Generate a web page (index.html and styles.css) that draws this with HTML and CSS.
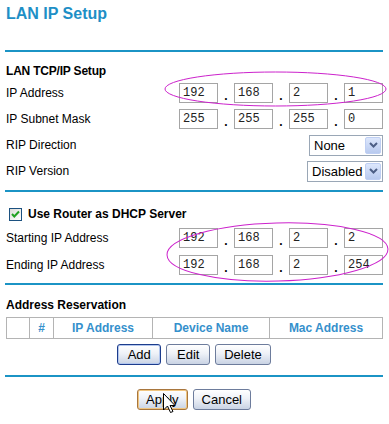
FILE: index.html
```html
<!DOCTYPE html>
<html lang="en">
<head>
    <meta charset="UTF-8">
    <title>LAN IP Setup</title>
    <link rel="stylesheet" href="styles.css">
</head>
<body>
<div class="page">
    <h1 class="title">LAN IP Setup</h1>
    <div class="rule rule-top"></div>

    <div class="section-title">LAN TCP/IP Setup</div>
    <div class="row">
        <span class="label">IP Address</span>
        <div class="ip">
            <input type="text" value="192"><span class="dot">.</span><input type="text" value="168"><span class="dot">.</span><input type="text" value="2"><span class="dot">.</span><input type="text" value="1">
        </div>
    </div>
    <div class="row">
        <span class="label">IP Subnet Mask</span>
        <div class="ip">
            <input type="text" value="255"><span class="dot">.</span><input type="text" value="255"><span class="dot">.</span><input type="text" value="255"><span class="dot">.</span><input type="text" value="0">
        </div>
    </div>
    <div class="row">
        <span class="label">RIP Direction</span>
        <div class="select select-none">
            <span class="value">None</span>
            <span class="arrow"><svg width="9" height="6" viewBox="0 0 9 6"><polyline points="1,1 4.5,4.5 8,1" fill="none" stroke="#4d5f86" stroke-width="2"/></svg></span>
        </div>
    </div>
    <div class="row">
        <span class="label">RIP Version</span>
        <div class="select select-disabled">
            <span class="value">Disabled</span>
            <span class="arrow"><svg width="9" height="6" viewBox="0 0 9 6"><polyline points="1,1 4.5,4.5 8,1" fill="none" stroke="#4d5f86" stroke-width="2"/></svg></span>
        </div>
    </div>
    <div class="rule rule-mid"></div>

    <div class="check-row">
        <span class="checkbox"><svg width="11" height="11" viewBox="0 0 11 11"><polyline points="2,5 4.3,7.5 9,2.5" fill="none" stroke="#21a121" stroke-width="2"/></svg></span>
        <span>Use Router as DHCP Server</span>
    </div>
    <div class="row row-dhcp">
        <span class="label">Starting IP Address</span>
        <div class="ip">
            <input type="text" value="192"><span class="dot">.</span><input type="text" value="168"><span class="dot">.</span><input type="text" value="2"><span class="dot">.</span><input type="text" value="2">
        </div>
    </div>
    <div class="row row-dhcp">
        <span class="label">Ending IP Address</span>
        <div class="ip">
            <input type="text" value="192"><span class="dot">.</span><input type="text" value="168"><span class="dot">.</span><input type="text" value="2"><span class="dot">.</span><input type="text" value="254">
        </div>
    </div>
    <div class="rule rule-low"></div>

    <div class="section-title reserve-title">Address Reservation</div>
    <table class="reserve">
        <tr>
            <th class="c-sel"></th>
            <th class="c-num">#</th>
            <th class="c-ip">IP Address</th>
            <th class="c-dev">Device Name</th>
            <th class="c-mac">Mac Address</th>
        </tr>
    </table>
    <div class="buttons">
        <button class="btn btn-default">Add</button>
        <button class="btn">Edit</button>
        <button class="btn">Delete</button>
    </div>
    <div class="rule rule-bottom"></div>

    <div class="buttons buttons-final">
        <button class="btn btn-hover">Apply</button>
        <button class="btn">Cancel</button>
    </div>
</div>

<!-- annotation marks drawn over the form -->
<svg class="marks" width="389" height="424" viewBox="0 0 389 424">
    <ellipse cx="275.5" cy="89" rx="110.5" ry="17" fill="none" stroke="#cc22cc" stroke-width="1"/>
    <ellipse cx="277.5" cy="252" rx="110.5" ry="29" fill="none" stroke="#cc22cc" stroke-width="1" transform="rotate(-1.5 277.5 252)"/>
    <path d="M163.5 393.5 V410 L167.5 406 L170.5 412.5 L173 411.5 L170 405.5 H175 Z" fill="#fff" stroke="#000" stroke-width="1" stroke-linejoin="miter"/>
</svg>
</body>
</html>
```

FILE: styles.css
```css
html, body {
    margin: 0;
    padding: 0;
    background-color: #fff;
    font-family: "Liberation Sans", Arial, sans-serif;
    color: #000;
}

body {
    position: relative;
    width: 389px;
    height: 424px;
    overflow: hidden;
}

.page {
    padding: 0 6px 0 5px;
}

.title {
    margin: 0;
    padding: 4px 0 0 1px;
    font-size: 16px;
    line-height: 20px;
    font-weight: bold;
    color: #1e8fc6;
}

.rule {
    height: 2px;
    background-color: #1b94c5;
}

.rule-top {
    margin-top: 26px;
}

.rule-mid {
    margin-top: 6px;
}

.rule-low {
    margin-top: 5px;
}

.rule-bottom {
    margin-top: 10px;
}

.section-title {
    margin-top: 10px;
    padding-left: 1px;
    font-size: 12px;
    line-height: 18px;
    font-weight: bold;
    letter-spacing: -0.2px;
}

.reserve-title {
    margin-top: 12px;
    line-height: 16px;
    letter-spacing: 0;
}

.row {
    display: flex;
    align-items: center;
    justify-content: space-between;
    height: 26px;
    padding-left: 1px;
    font-size: 12px;
}

.row-dhcp {
    height: 27px;
}

.ip {
    display: flex;
    align-items: center;
}

.ip input {
    width: 39px;
    height: 20px;
    box-sizing: border-box;
    margin: 0;
    padding: 0 0 0 3px;
    border: 1px solid #a5a5a5;
    font-family: "Liberation Mono", "Courier New", monospace;
    font-size: 12px;
    color: #222;
    background-color: #fff;
}

.dot {
    width: 16px;
    align-self: flex-end;
    text-align: center;
    font-size: 12px;
    line-height: 14px;
    font-weight: bold;
}

.select {
    display: flex;
    align-items: center;
    height: 21px;
    box-sizing: border-box;
    padding: 1px;
    border: 1px solid #9aa7b6;
    font-size: 13px;
    background-color: #fff;
}

.select .value {
    flex: 1;
    padding-left: 3px;
}

.select .arrow {
    display: flex;
    align-items: center;
    justify-content: center;
    width: 16px;
    height: 17px;
    box-sizing: border-box;
    border: 1px solid #bfcff3;
    border-radius: 2px;
    background: linear-gradient(#dde7fc, #b8caef);
}

.select-none {
    width: 74px;
}

.select-disabled {
    width: 76px;
}

.check-row {
    display: flex;
    align-items: center;
    height: 20px;
    margin-top: 12px;
    padding-left: 4px;
    font-size: 12px;
    font-weight: bold;
}

.checkbox {
    display: flex;
    align-items: center;
    justify-content: center;
    width: 13px;
    height: 13px;
    box-sizing: border-box;
    margin-right: 6px;
    border: 1px solid #1c5180;
    background: linear-gradient(135deg, #dcdcd7, #fff);
}

.reserve {
    width: 377px;
    margin: 4px 0 0 1px;
    border-collapse: collapse;
    table-layout: fixed;
}

.reserve th {
    height: 20px;
    padding: 0;
    border: 1px solid #b4b4b4;
    font-size: 12px;
    font-weight: bold;
    color: #3590cc;
    text-align: center;
}

.c-sel { width: 22px; }
.c-num { width: 23px; }
.c-ip { width: 98px; }
.c-dev { width: 116px; }

.buttons {
    display: flex;
    justify-content: center;
    gap: 5px;
    margin-top: 5px;
}

.buttons-final {
    margin-top: 12px;
}

.btn {
    height: 21px;
    min-width: 44px;
    box-sizing: border-box;
    margin: 0;
    padding: 0 8px;
    border: 1px solid #6d7c9c;
    border-radius: 3px;
    font-family: "Liberation Sans", Arial, sans-serif;
    font-size: 13px;
    color: #000;
    background: linear-gradient(#ffffff, #eef1f7 45%, #c9d3e4);
}

.btn-default {
    border-color: #1c3c8c;
    box-shadow: inset 0 0 0 1px #b2c6ee;
}

.btn-hover {
    border-color: #a8763e;
    box-shadow: inset 0 0 0 1px #f0c57f;
}

.marks {
    position: absolute;
    top: 0;
    left: 0;
    pointer-events: none;
}
```
